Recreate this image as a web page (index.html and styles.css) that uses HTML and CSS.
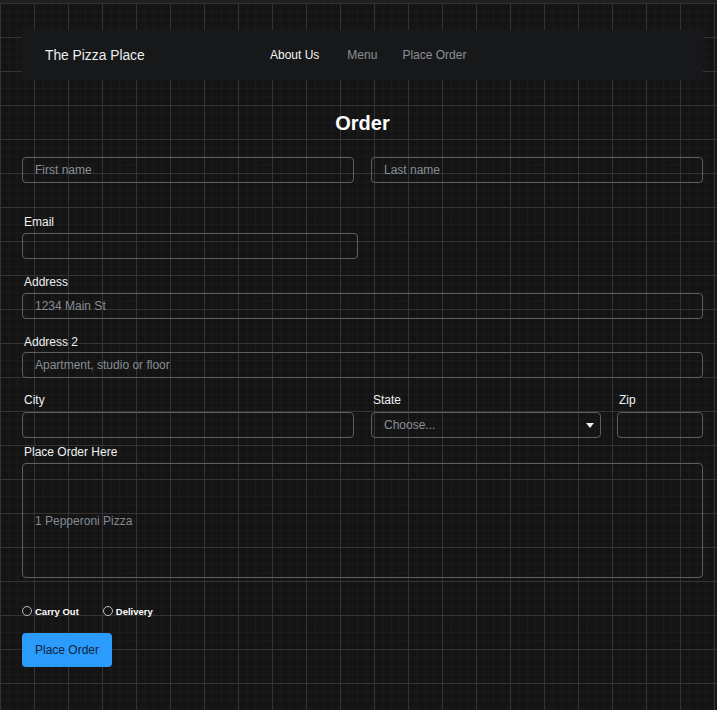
FILE: index.html
```html
<!DOCTYPE html>
<html lang="en">
<head>
<meta charset="utf-8">
<title>The Pizza Place - Order</title>
<link rel="stylesheet" href="styles.css">
</head>
<body>
<div class="page">
  <nav class="navbar">
    <span class="brand">The Pizza Place</span>
    <ul class="links">
      <li class="active">About Us</li>
      <li>Menu</li>
      <li class="last">Place Order</li>
    </ul>
  </nav>

  <h1 class="title">Order</h1>

  <form class="form">
    <div class="row row-names">
      <input class="field" type="text" placeholder="First name">
      <input class="field" type="text" placeholder="Last name">
    </div>

    <div class="group g-email">
      <label class="label">Email</label>
      <input class="field email" type="email">
    </div>

    <div class="group g-addr">
      <label class="label">Address</label>
      <input class="field" type="text" placeholder="1234 Main St">
    </div>

    <div class="group g-addr2">
      <label class="label tight">Address 2</label>
      <input class="field" type="text" placeholder="Apartment, studio or floor">
    </div>

    <div class="row row-city">
      <div class="group">
        <label class="label loose">City</label>
        <input class="field" type="text">
      </div>
      <div class="group">
        <label class="label loose">State</label>
        <div class="select-wrap">
          <select class="field select">
            <option>Choose...</option>
          </select>
        </div>
      </div>
      <div class="group zip">
        <label class="label loose">Zip</label>
        <input class="field" type="text">
      </div>
    </div>

    <div class="group g-order">
      <label class="label">Place Order Here</label>
      <textarea class="field area">1 Pepperoni Pizza</textarea>
    </div>

    <div class="radios">
      <label class="radio"><input type="radio" name="mode"> Carry Out</label>
      <label class="radio"><input type="radio" name="mode"> Delivery</label>
    </div>

    <button type="button" class="submit">Place Order</button>
  </form>
</div>
</body>
</html>
```

FILE: styles.css
```css
* { box-sizing: border-box; }

html {
  background-color: #141414;
}

body {
  margin: 0;
  min-height: 710px;
  border-top: 3px solid #1e2023;
  font-family: "Liberation Sans", Arial, sans-serif;
  color: #e9ecef;
  background-color: #141414;
  background-image:
    linear-gradient(to right, #343434 1px, transparent 1px),
    linear-gradient(to bottom, #343434 1px, transparent 1px),
    linear-gradient(to right, #1b1b1b 1px, transparent 1px),
    linear-gradient(to bottom, #1b1b1b 1px, transparent 1px);
  background-size: 34px 34px, 34px 34px, 8.5px 8.5px, 8.5px 8.5px;
}

.page {
  padding: 27px 14px 40px 22px;
}

.navbar {
  height: 50px;
  background: #17181a;
  display: flex;
  align-items: center;
  padding-left: 23px;
}

.brand {
  font-size: 13.8px;
  color: #eceef0;
  width: 225px;
}

.links {
  list-style: none;
  margin: 0;
  padding: 0;
  display: flex;
  gap: 28px;
  font-size: 12px;
  color: #8c8f93;
}

.links .active {
  color: #f4f5f6;
}

.links .last {
  margin-left: -3px;
}

.title {
  margin: 31px 0 0;
  font-size: 20px;
  line-height: 24px;
  font-weight: bold;
  text-align: center;
  color: #ffffff;
}

.form {
  display: flex;
  flex-direction: column;
}

.row {
  display: grid;
}

.row-names {
  margin-top: 22px;
  grid-template-columns: 332px 332px;
  column-gap: 17px;
}

.group {
  display: flex;
  flex-direction: column;
}

.label {
  font-size: 12px;
  line-height: 18px;
  margin: 0 0 2px 2px;
  color: #eef0f2;
}

.label.tight { margin-bottom: 1px; }
.label.loose { margin-bottom: 3px; }

.g-email { margin-top: 30px; }
.g-addr { margin-top: 14px; }
.g-addr2 { margin-top: 14px; }

.row-city {
  margin-top: 13px;
  grid-template-columns: 332px 230px 86px;
  column-gap: 17px;
}

.row-city .zip {
  margin-left: -1px;
  width: 86px;
}

.g-order { margin-top: 5px; }

.field {
  height: 26px;
  width: 100%;
  border: 1px solid #5e5e5e;
  border-radius: 4px;
  background: transparent;
  padding: 0 12px;
  font-family: "Liberation Sans", Arial, sans-serif;
  font-size: 12px;
  color: #8a9199;
  outline: none;
}

.field::placeholder {
  color: #878e96;
  opacity: 1;
}

.email { width: 336px; }

.select-wrap {
  position: relative;
}

.select {
  appearance: none;
  -webkit-appearance: none;
  color: #8a9199;
}

.select option {
  background: #141414;
}

.select-wrap::after {
  content: "";
  position: absolute;
  right: 7px;
  top: 11px;
  border-left: 4px solid transparent;
  border-right: 4px solid transparent;
  border-top: 5px solid #f0f0f0;
  pointer-events: none;
}

.area {
  height: 115px;
  resize: none;
  padding: 50px 12px 0;
  line-height: 14px;
  color: #838b94;
}

.radios {
  margin-top: 27px;
  display: flex;
  gap: 24px;
  height: 12px;
  align-items: center;
}

.radio {
  display: flex;
  align-items: center;
  gap: 3px;
  font-size: 9.5px;
  font-weight: bold;
  color: #ffffff;
}

.radio input {
  appearance: none;
  -webkit-appearance: none;
  margin: 0;
  width: 10px;
  height: 10px;
  border: 1.5px solid #bdbdbd;
  border-radius: 50%;
  background: transparent;
}

.submit {
  margin-top: 16px;
  width: 90px;
  height: 34px;
  border: none;
  border-radius: 4px;
  background: #2b9bfd;
  color: #10233a;
  font-family: "Liberation Sans", Arial, sans-serif;
  font-size: 12px;
  padding: 0;
}
```
